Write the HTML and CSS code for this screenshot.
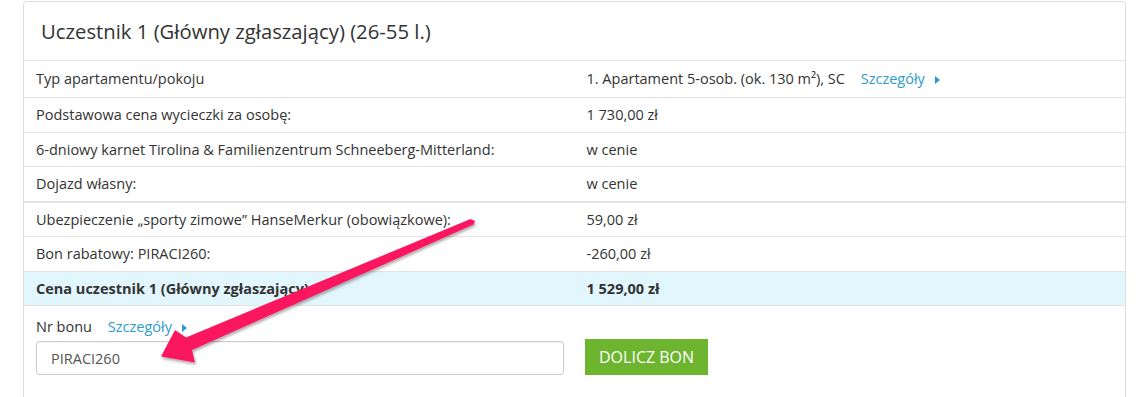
FILE: index.html
```html
<!DOCTYPE html>
<html lang="pl">
<head>
  <meta charset="UTF-8">
  <title>Uczestnik 1</title>
  <link rel="stylesheet" href="styles.css">
</head>
<body>
  <div class="panel">
    <div class="panel-heading">Uczestnik 1 (Główny zgłaszający) (26-55 l.)</div>

    <table class="price-table">
      <tr class="first">
        <td>Typ apartamentu/pokoju</td>
        <td>1. Apartament 5-osob. (ok. 130 m²), SC <a href="#" class="details">Szczegóły <span class="caret"></span></a></td>
      </tr>
      <tr>
        <td>Podstawowa cena wycieczki za osobę:</td>
        <td>1 730,00 zł</td>
      </tr>
      <tr>
        <td>6-dniowy karnet Tirolina &amp; Familienzentrum Schneeberg-Mitterland:</td>
        <td>w cenie</td>
      </tr>
      <tr>
        <td>Dojazd własny:</td>
        <td>w cenie</td>
      </tr>
      <tr class="split">
        <td>Ubezpieczenie „sporty zimowe” HanseMerkur (obowiązkowe):</td>
        <td>59,00 zł</td>
      </tr>
      <tr>
        <td>Bon rabatowy: PIRACI260:</td>
        <td>-260,00 zł</td>
      </tr>
      <tr class="total">
        <td>Cena uczestnik 1 (Główny zgłaszający):</td>
        <td>1 529,00 zł</td>
      </tr>
    </table>

    <div class="voucher">
      <div class="voucher-field">
        <div class="voucher-label">Nr bonu <a href="#" class="details">Szczegóły <span class="caret"></span></a></div>
        <input type="text" class="voucher-input" value="PIRACI260">
      </div>
      <button type="button" class="btn-voucher">Dolicz bon</button>
    </div>
  </div>

  <!-- strzałka z adnotacji -->
  <svg class="annotation" width="1144" height="397" viewBox="0 0 1144 397">
    <defs>
      <filter id="cien" x="-10%" y="-10%" width="130%" height="130%">
        <feDropShadow dx="1" dy="2" stdDeviation="1.5" flood-color="#000" flood-opacity="0.35"/>
      </filter>
    </defs>
    <polygon filter="url(#cien)" fill="#fb1760"
      points="470.5,219 186,337.5 175,330 161,356.5 195,362.5 192,350 473.5,224.5 475,221"/>
  </svg>
</body>
</html>
```

FILE: styles.css
```css
body {
  margin: 0;
  padding: 1px 0 0 23px;
  font-family: 'Open Sans', 'Noto Sans', sans-serif;
  font-size: 14.5px;
  color: #333;
  background-color: #fff;
  overflow: hidden;
  height: 397px;
}
.panel {
  width: 1101px;
  border: 1px solid #ddd;
  border-bottom: none;
  border-radius: 4px 4px 0 0;
  background-color: #fff;
  height: 396px;
}
.panel-heading {
  height: 58px;
  display: flex;
  align-items: center;
  padding-left: 17px;
  font-size: 20.3px;
  color: #333;
}
.price-table {
  width: 100%;
  border-collapse: collapse;
}
.price-table td {
  width: 50%;
  border-top: 1px solid #e3e3e3;
  border-bottom: 1px solid #e3e3e3;
  padding: 7px 12px 6.5px;
  line-height: 20px;
  vertical-align: middle;
}
.price-table tr.first td {
  padding-top: 8px;
  padding-bottom: 8px;
}
.price-table tr.split td {
  border-top: 2px solid #e3e3e3;
}
.price-table tr.total td {
  background-color: #e2f6fd;
  font-weight: bold;
}
.details {
  color: #2d9bcd;
  text-decoration: none;
  margin-left: 12px;
}
.caret {
  display: inline-block;
  width: 0;
  height: 0;
  border-top: 4px solid transparent;
  border-bottom: 4px solid transparent;
  border-left: 5px solid #2d9bcd;
  margin-left: 6px;
  vertical-align: 0;
}
.voucher {
  display: flex;
  align-items: flex-end;
  gap: 21px;
  padding: 11px 12px 0;
}
.voucher-field {
  width: 528px;
}
.voucher-label {
  line-height: 20px;
  margin-bottom: 4px;
}
.voucher-label .details {
  margin-left: 12px;
}
.voucher-input {
  box-sizing: border-box;
  width: 528px;
  height: 34px;
  border: 1px solid #ccc;
  border-radius: 3px;
  padding: 0 14px;
  font-family: inherit;
  font-size: 14.5px;
  color: #555;
  box-shadow: inset 0 1px 1px rgba(0, 0, 0, 0.05);
}
.btn-voucher {
  height: 36px;
  padding: 0 14px;
  background-color: #6db42f;
  color: #fff;
  border: none;
  font-family: inherit;
  font-size: 16px;
  text-transform: uppercase;
  cursor: pointer;
}
.annotation {
  position: absolute;
  left: 0;
  top: 0;
  pointer-events: none;
}
```
